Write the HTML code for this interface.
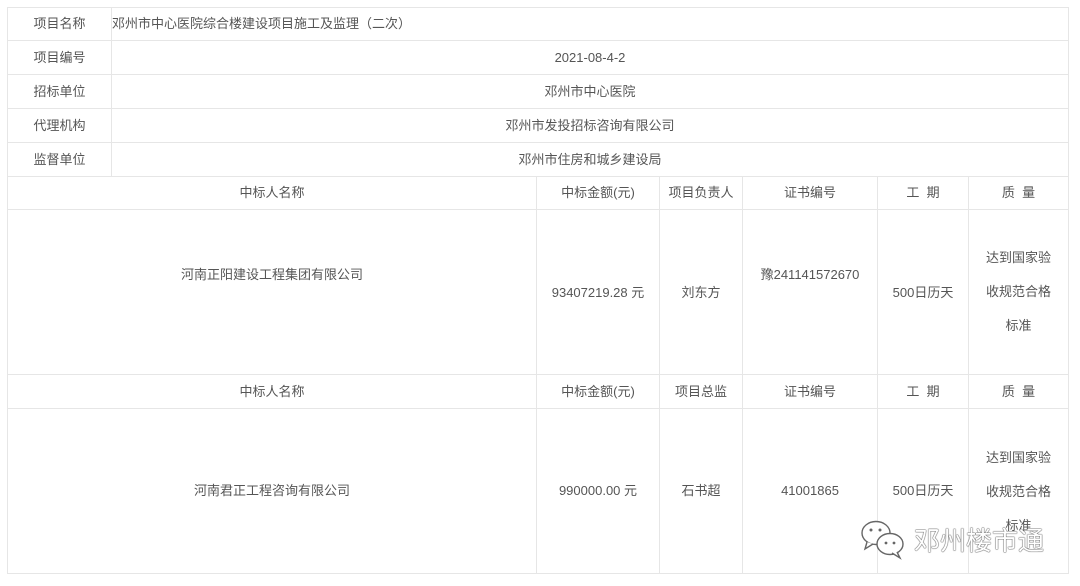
<!DOCTYPE html>
<html><head><meta charset="utf-8"><style>
body{margin:0;width:1080px;height:586px;background:#fff;position:relative;overflow:hidden;font-family:"Liberation Sans","Noto Sans CJK SC",sans-serif;font-size:13px;color:#555}
.c{position:absolute;box-sizing:border-box;border:1px solid #e6e6e6;display:flex;align-items:center;justify-content:center;text-align:center;line-height:34px}
.l{justify-content:flex-start;padding-left:0}
.q{line-height:34px;flex-direction:column}
</style></head><body>
<div class="c" style="left:7px;top:7px;width:105px;height:34px">项目名称</div>
<div class="c l" style="left:111px;top:7px;width:958px;height:34px">邓州市中心医院综合楼建设项目施工及监理（二次）</div>
<div class="c" style="left:7px;top:40px;width:105px;height:35px">项目编号</div>
<div class="c" style="left:111px;top:40px;width:958px;height:35px">2021-08-4-2</div>
<div class="c" style="left:7px;top:74px;width:105px;height:35px">招标单位</div>
<div class="c" style="left:111px;top:74px;width:958px;height:35px">邓州市中心医院</div>
<div class="c" style="left:7px;top:108px;width:105px;height:35px">代理机构</div>
<div class="c" style="left:111px;top:108px;width:958px;height:35px">邓州市发投招标咨询有限公司</div>
<div class="c" style="left:7px;top:142px;width:105px;height:35px">监督单位</div>
<div class="c" style="left:111px;top:142px;width:958px;height:35px">邓州市住房和城乡建设局</div>

<div class="c" style="left:7px;top:176px;width:530px;height:34px">中标人名称</div>
<div class="c" style="left:536px;top:176px;width:124px;height:34px">中标金额(元)</div>
<div class="c" style="left:659px;top:176px;width:84px;height:34px">项目负责人</div>
<div class="c" style="left:742px;top:176px;width:136px;height:34px">证书编号</div>
<div class="c" style="left:877px;top:176px;width:92px;height:34px">工&nbsp;&nbsp;期</div>
<div class="c" style="left:968px;top:176px;width:101px;height:34px">质&nbsp;&nbsp;量</div>

<div class="c" style="left:7px;top:209px;width:530px;height:166px;padding-bottom:34px">河南正阳建设工程集团有限公司</div>
<div class="c" style="left:536px;top:209px;width:124px;height:166px;padding-top:2px">93407219.28 元</div>
<div class="c" style="left:659px;top:209px;width:84px;height:166px;padding-top:2px">刘东方</div>
<div class="c" style="left:742px;top:209px;width:136px;height:166px;padding-bottom:34px">豫241141572670</div>
<div class="c" style="left:877px;top:209px;width:92px;height:166px;padding-top:2px">500日历天</div>
<div class="c q" style="left:968px;top:209px;width:101px;height:166px"><div>达到国家验</div><div>收规范合格</div><div>标准</div></div>

<div class="c" style="left:7px;top:374px;width:530px;height:35px">中标人名称</div>
<div class="c" style="left:536px;top:374px;width:124px;height:35px">中标金额(元)</div>
<div class="c" style="left:659px;top:374px;width:84px;height:35px">项目总监</div>
<div class="c" style="left:742px;top:374px;width:136px;height:35px">证书编号</div>
<div class="c" style="left:877px;top:374px;width:92px;height:35px">工&nbsp;&nbsp;期</div>
<div class="c" style="left:968px;top:374px;width:101px;height:35px">质&nbsp;&nbsp;量</div>

<div class="c" style="left:7px;top:408px;width:530px;height:166px">河南君正工程咨询有限公司</div>
<div class="c" style="left:536px;top:408px;width:124px;height:166px">990000.00 元</div>
<div class="c" style="left:659px;top:408px;width:84px;height:166px">石书超</div>
<div class="c" style="left:742px;top:408px;width:136px;height:166px">41001865</div>
<div class="c" style="left:877px;top:408px;width:92px;height:166px">500日历天</div>
<div class="c q" style="left:968px;top:408px;width:101px;height:166px;justify-content:flex-start;padding-top:32px"><div>达到国家验</div><div>收规范合格</div><div>标准</div></div>

<div style="position:absolute;left:860px;top:518px;display:flex;align-items:center;color:#fff;text-shadow:0 0 1px #555,0 0 1px #555,0 0 1px #555">
<svg width="48" height="42" viewBox="0 0 48 42" style="margin-right:6px"><g fill="#fff" stroke="#666" stroke-width="1.4"><ellipse cx="16" cy="15" rx="14" ry="11.5"/><path d="M7 24 L5 31 L13 26"/><ellipse cx="30" cy="26" rx="13" ry="10.5"/><path d="M37 34 L40 40 L32 35"/></g><g fill="#666"><circle cx="11" cy="12" r="1.5"/><circle cx="20" cy="12" r="1.5"/><circle cx="26" cy="25" r="1.4"/><circle cx="34" cy="25" r="1.4"/></g></svg>
<span style="font-size:26px;letter-spacing:0">邓州楼市通</span></div>
</body></html>
